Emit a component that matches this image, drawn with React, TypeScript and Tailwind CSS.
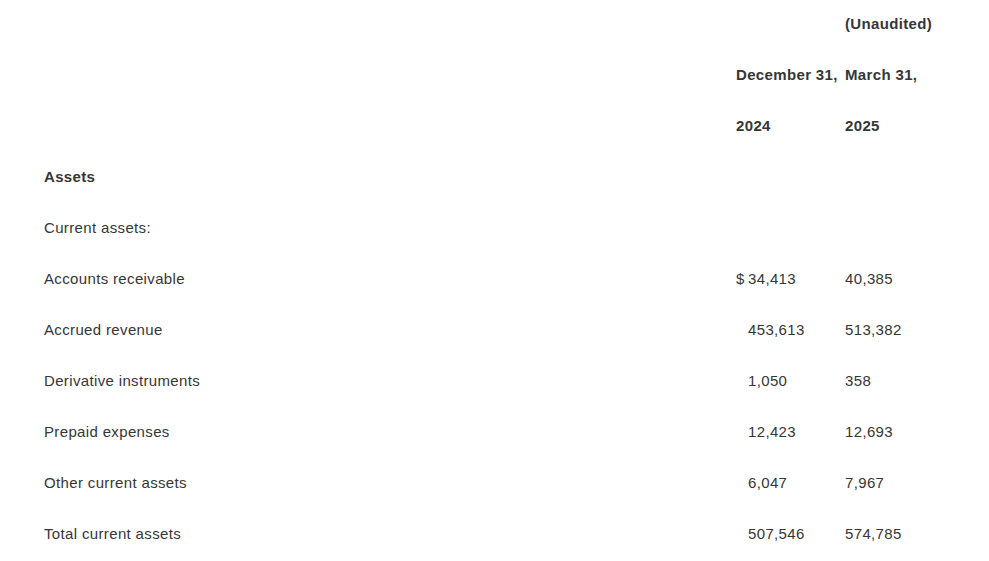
import React from 'react';

type Row = {
  label: string;
  bold?: boolean;
  dollar?: boolean;
  a?: string;
  b?: string;
};

const rows: Row[] = [
  { label: 'Assets', bold: true },
  { label: 'Current assets:' },
  { label: 'Accounts receivable', dollar: true, a: '34,413', b: '40,385' },
  { label: 'Accrued revenue', a: '453,613', b: '513,382' },
  { label: 'Derivative instruments', a: '1,050', b: '358' },
  { label: 'Prepaid expenses', a: '12,423', b: '12,693' },
  { label: 'Other current assets', a: '6,047', b: '7,967' },
  { label: 'Total current assets', a: '507,546', b: '574,785' },
];

export default function App() {
  return (
    <div className="min-h-screen bg-white text-[#363636] text-[15px] tracking-[0.35px] font-['Liberation_Sans',Arial,sans-serif]">
      <div className="grid grid-cols-[692px_109px_1fr] pl-[44px] auto-rows-[51px] items-center -mt-px">
        {/* header */}
        <div />
        <div />
        <div className="font-bold">(Unaudited)</div>

        <div />
        <div className="font-bold whitespace-nowrap">December 31,</div>
        <div className="font-bold">March 31,</div>

        <div />
        <div className="font-bold">2024</div>
        <div className="font-bold">2025</div>

        {rows.map((r) => (
          <React.Fragment key={r.label}>
            <div className={r.bold ? 'font-bold' : ''}>{r.label}</div>
            <div className="flex">
              <span className="w-3">{r.dollar ? '$' : ''}</span>
              <span>{r.a}</span>
            </div>
            <div>{r.b}</div>
          </React.Fragment>
        ))}
      </div>
    </div>
  );
}
